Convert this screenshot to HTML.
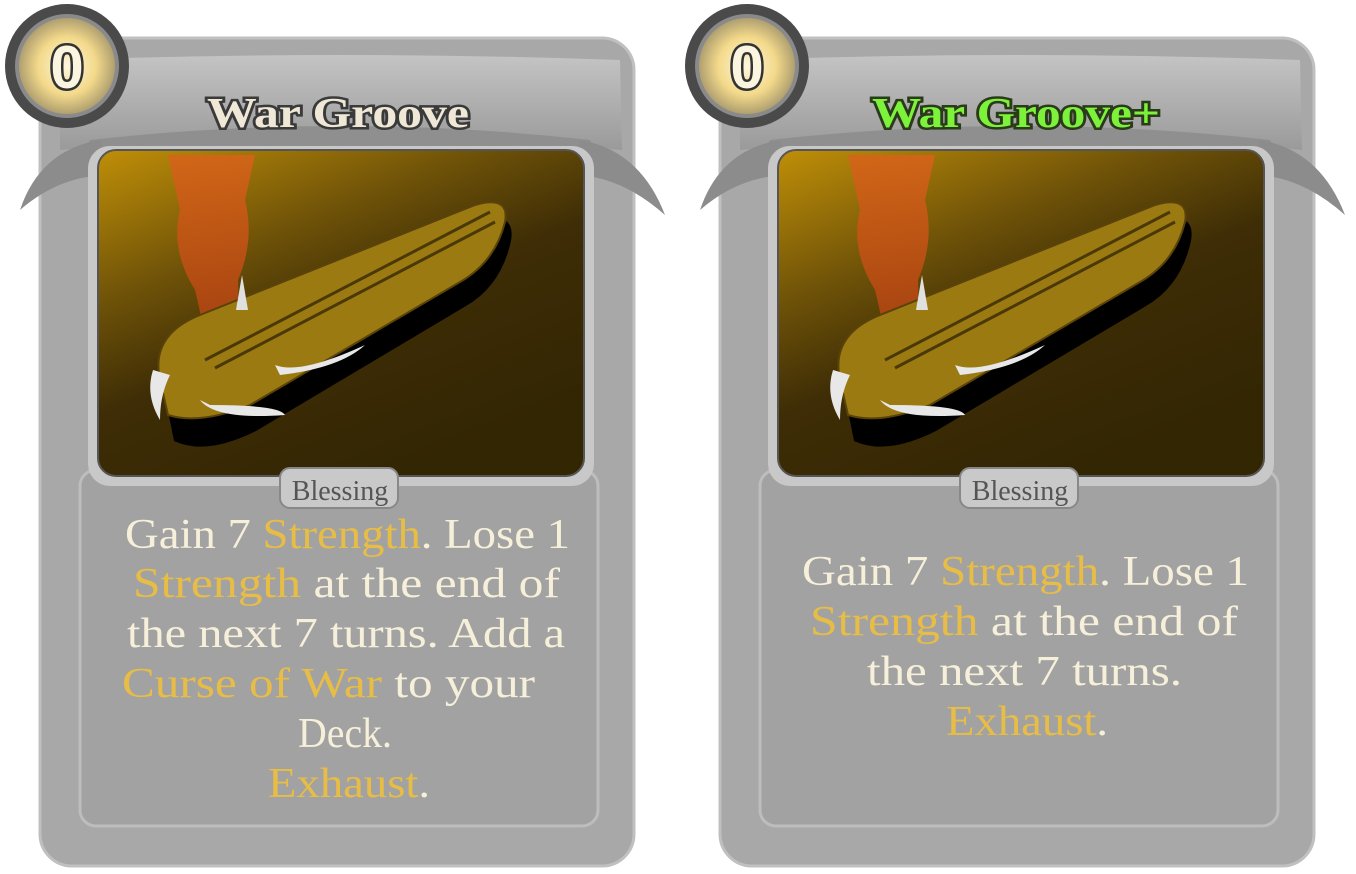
<!DOCTYPE html>
<html><head><meta charset="utf-8"><style>
html,body{margin:0;padding:0;background:#fff;width:1356px;height:874px;overflow:hidden}
svg{display:block}
.t{font-family:"Liberation Serif",serif;font-size:42px;fill:#f6efd9}
.y{fill:#e8bd45}
</style></head><body>
<svg width="1356" height="874" viewBox="0 0 1356 874" xmlns="http://www.w3.org/2000/svg">
<defs>
<linearGradient id="art" x1="0" y1="0" x2="0.6" y2="1">
<stop offset="0" stop-color="#c08f08"/><stop offset="0.35" stop-color="#6e5208"/><stop offset="0.6" stop-color="#3e2d06"/><stop offset="1" stop-color="#332603"/>
</linearGradient>
<linearGradient id="band" x1="0" y1="0" x2="0" y2="1">
<stop offset="0" stop-color="#c4c4c4"/><stop offset="1" stop-color="#9a9a9a"/>
</linearGradient>
<radialGradient id="orb" cx="0.5" cy="0.5" r="0.5">
<stop offset="0" stop-color="#fff8e0"/><stop offset="0.6" stop-color="#f3d98a"/><stop offset="1" stop-color="#b0a070"/>
</radialGradient>
<linearGradient id="flame" x1="0" y1="0" x2="0" y2="1">
<stop offset="0" stop-color="#d8621a" stop-opacity="0.85"/><stop offset="1" stop-color="#b03a10" stop-opacity="0.8"/>
</linearGradient>
<g id="card">
<rect x="40" y="38" width="594" height="828" rx="32" fill="#a8a8a8" stroke="#c0c0c0" stroke-width="3"/>
<rect x="80" y="470" width="518" height="356" rx="16" fill="#a2a2a2" stroke="#bdbdbd" stroke-width="3"/>
<path d="M60 60 Q340 50 620 60 L622 150 Q340 120 60 150 Z" fill="url(#band)"/>
<path d="M90 140 Q340 112 590 140 L600 160 L80 160 Z" fill="#8f8f8f"/>
<path d="M20 210 Q40 150 100 140 L110 175 Q60 175 20 210 Z" fill="#8c8c8c"/>
<path d="M665 215 Q640 150 580 140 L572 175 Q620 175 665 215 Z" fill="#8c8c8c"/>
<rect x="88" y="146" width="506" height="340" rx="22" fill="#c8c8c8"/>
<rect x="98" y="150" width="486" height="326" rx="18" fill="url(#art)" stroke="#555" stroke-width="2"/>
<path d="M168 155 L255 155 L245 200 Q255 240 238 280 Q240 330 228 385 L212 385 Q205 330 195 290 Q170 250 180 210 Z" fill="url(#flame)"/>
<path d="M160 385 Q150 340 200 320 L475 205 Q510 195 505 225 Q495 270 460 290 L250 415 Q200 440 168 425 Z" fill="#000" transform="translate(6,16)"/>
<path d="M160 380 Q150 335 200 315 L475 205 Q510 195 505 222 Q495 262 460 282 L250 405 Q200 425 168 415 Z" fill="#9c7a12" stroke="#5a430a" stroke-width="2"/>
<path d="M205 360 L490 212 M215 368 L495 222" stroke="#4a3807" stroke-width="3"/>
<path d="M153 370 Q145 395 160 420 Q160 395 170 375 Z" fill="#e8e8e8"/>
<path d="M200 400 Q215 420 285 415 Q280 405 210 405 Z" fill="#e8e8e8"/>
<path d="M275 365 Q300 375 365 345 Q340 368 280 375 Z" fill="#e8e8e8"/>
<path d="M236 310 L242 275 L248 310 Z" fill="#e0e0e0"/>
<rect x="280" y="468" width="118" height="40" rx="10" fill="#c9c9c9" stroke="#888" stroke-width="2"/>
<text x="340" y="500" text-anchor="middle" font-family="Liberation Serif,serif" font-size="28" fill="#555">Blessing</text>
<circle cx="67" cy="66" r="62" fill="#4a4a4a"/>
<circle cx="67" cy="66" r="52" fill="#8a8a8a"/>
<circle cx="67" cy="66" r="48" fill="url(#orb)"/>
<text x="67" y="88" text-anchor="middle" font-family="Liberation Sans,sans-serif" font-weight="bold" font-size="60" fill="#fbf4de" stroke="#333" stroke-width="5" paint-order="stroke">0</text>
</g>
</defs>
<use href="#card"/>
<use href="#card" transform="translate(680,0)"/>
<text x="338" y="127" text-anchor="middle" font-family="Liberation Serif,serif" font-weight="bold" font-size="42" fill="#efe8d6" stroke="#3a3a3a" stroke-width="5" paint-order="stroke" textLength="262" lengthAdjust="spacingAndGlyphs">War Groove</text>
<text x="1016" y="127" text-anchor="middle" font-family="Liberation Serif,serif" font-weight="bold" font-size="42" fill="#7cf23a" stroke="#2a3a1a" stroke-width="5" paint-order="stroke" textLength="288" lengthAdjust="spacingAndGlyphs">War Groove+</text>
<g class="t">
<text x="125" y="548" textLength="445" lengthAdjust="spacingAndGlyphs">Gain 7 <tspan class="y">Strength</tspan>. Lose 1</text>
<text x="133" y="597" textLength="427" lengthAdjust="spacingAndGlyphs"><tspan class="y">Strength</tspan> at the end of</text>
<text x="127" y="647" textLength="438" lengthAdjust="spacingAndGlyphs">the next 7 turns. Add a</text>
<text x="122" y="697" textLength="413" lengthAdjust="spacingAndGlyphs"><tspan class="y">Curse of War</tspan> to your</text>
<text x="298" y="747" textLength="94" lengthAdjust="spacingAndGlyphs">Deck.</text>
<text x="268" y="797" textLength="162" lengthAdjust="spacingAndGlyphs"><tspan class="y">Exhaust</tspan>.</text>
<text x="802" y="585" textLength="447" lengthAdjust="spacingAndGlyphs">Gain 7 <tspan class="y">Strength</tspan>. Lose 1</text>
<text x="810" y="635" textLength="428" lengthAdjust="spacingAndGlyphs"><tspan class="y">Strength</tspan> at the end of</text>
<text x="867" y="685" textLength="315" lengthAdjust="spacingAndGlyphs">the next 7 turns.</text>
<text x="946" y="735" textLength="162" lengthAdjust="spacingAndGlyphs"><tspan class="y">Exhaust</tspan>.</text>
</g>
</svg>
</body></html>
